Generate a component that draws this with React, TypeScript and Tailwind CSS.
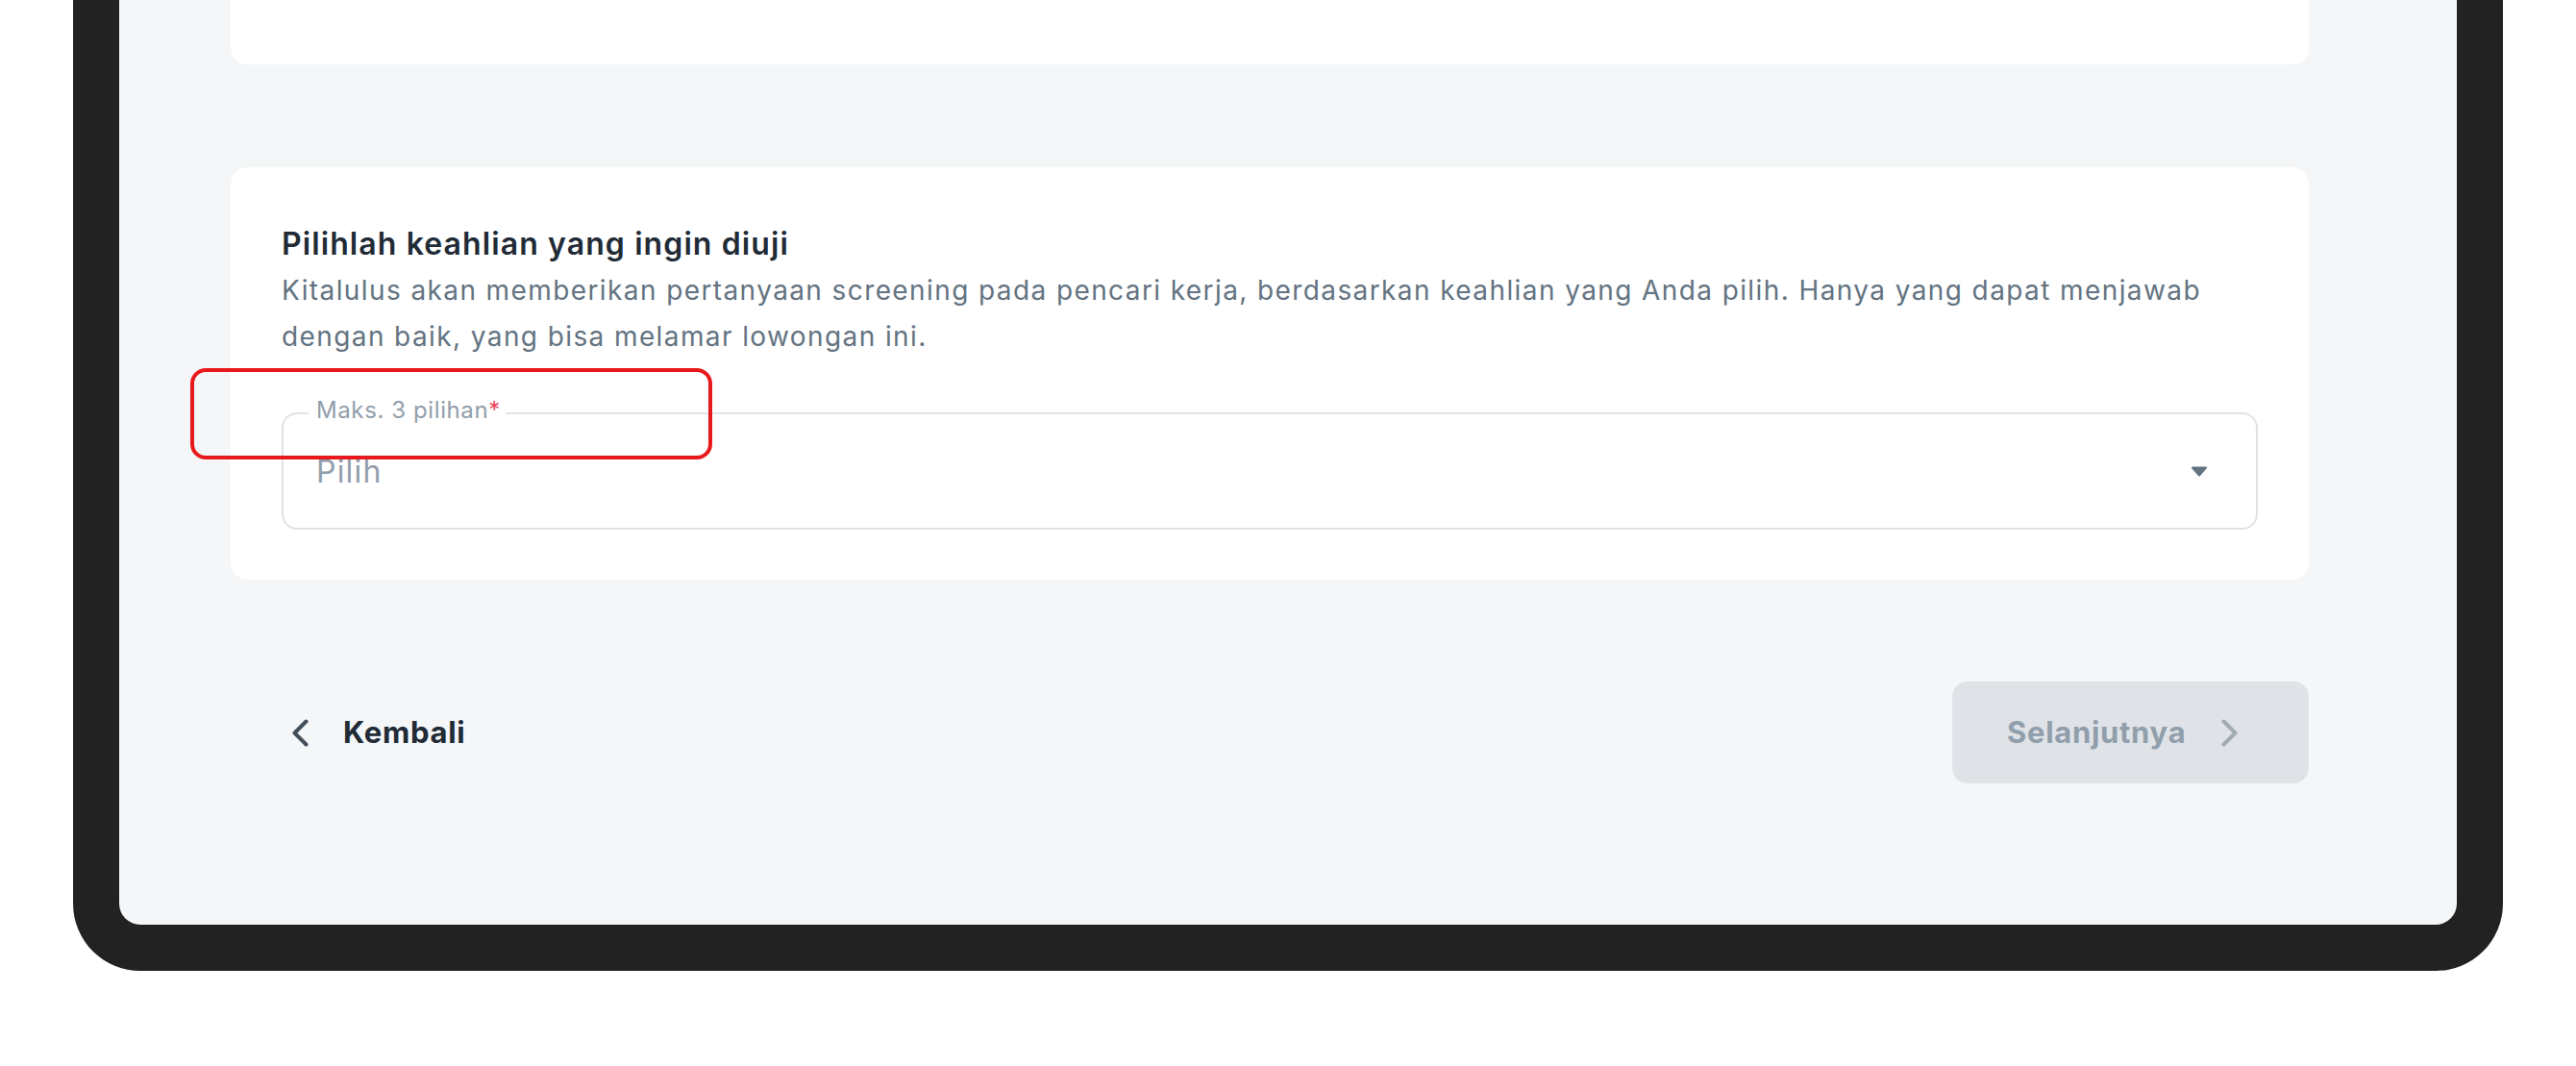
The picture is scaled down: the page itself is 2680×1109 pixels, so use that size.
export default function App() {
  return (
    <div className="w-[2680px] h-[1109px] bg-white font-['Inter',sans-serif] overflow-hidden">
      <div className="ml-[76px] w-[2528px] h-[1010px] bg-[#222222] px-[48px] pb-[48px] rounded-b-[70px]">
        <div className="h-full bg-[#f4f6f8] rounded-b-[22px] pl-[116px] pr-[154px] flex flex-col">
          <div className="h-[67px] shrink-0 bg-white rounded-b-[16px]" />
          <div className="relative shrink-0 mt-[107px] bg-white rounded-[18px] px-[53px] pt-[56px] h-[429px]">
            <h2 className="text-[32px] leading-[48px] font-semibold text-[#212b36] tracking-[1.1px]">
              Pilihlah keahlian yang ingin diuji
            </h2>
            <p className="text-[28px] leading-[48px] text-[#637381] tracking-[1.4px] whitespace-nowrap">
              Kitalulus akan memberikan pertanyaan screening pada pencari kerja, berdasarkan keahlian yang Anda pilih. Hanya yang dapat menjawab
              <br />
              dengan baik, yang bisa melamar lowongan ini.
            </p>
            <div className="relative mt-[55px] h-[122px] border-2 border-[#dfe3e8] rounded-[16px] flex items-center pl-[34px] pr-[50px]">
              <span className="absolute left-[26px] top-[-16px] bg-white pl-[8px] pr-[5px] text-[24px] leading-[24px] text-[#919eab] tracking-[0.6px] whitespace-nowrap">
                Maks. 3 pilihan<span className="text-[#ec4660]">*</span>
              </span>
              <span className="flex-1 text-[32px] leading-[48px] pt-[2px] text-[#919eab] tracking-[1.2px]">Pilih</span>
              <svg width="18" height="11" viewBox="0 0 18 11" className="shrink-0">
                <path d="M2 1.5 H16 L9 9.5 Z" fill="#637381" stroke="#637381" strokeWidth="2" strokeLinejoin="round" />
              </svg>
            </div>
            <div className="absolute left-[-42px] top-[209px] w-[543px] h-[95px] border-[4px] border-[#e8191c] rounded-[16px] pointer-events-none" />
          </div>
          <div className="mt-[106px] h-[106px] shrink-0 flex items-center justify-between">
            <button className="flex items-center gap-[36px] pl-[64px] text-[31px] font-bold text-[#212b36] tracking-[0.7px]">
              <svg width="17" height="29" viewBox="0 0 17 29">
                <polyline points="14.5,2.5 2.5,14.5 14.5,26.5" fill="none" stroke="#454f5b" strokeWidth="4" strokeLinecap="round" strokeLinejoin="round" />
              </svg>
              <span>Kembali</span>
            </button>
            <button className="h-[106px] w-[371px] bg-[#dfe3e8] rounded-[16px] flex items-center gap-[37px] pl-[57px] text-[31px] font-bold text-[#919eab] tracking-[0.7px]">
              <span>Selanjutnya</span>
              <svg width="17" height="29" viewBox="0 0 17 29">
                <polyline points="2.5,2.5 14.5,14.5 2.5,26.5" fill="none" stroke="#a3abb3" strokeWidth="4" strokeLinecap="round" strokeLinejoin="round" />
              </svg>
            </button>
          </div>
        </div>
      </div>
    </div>
  );
}
